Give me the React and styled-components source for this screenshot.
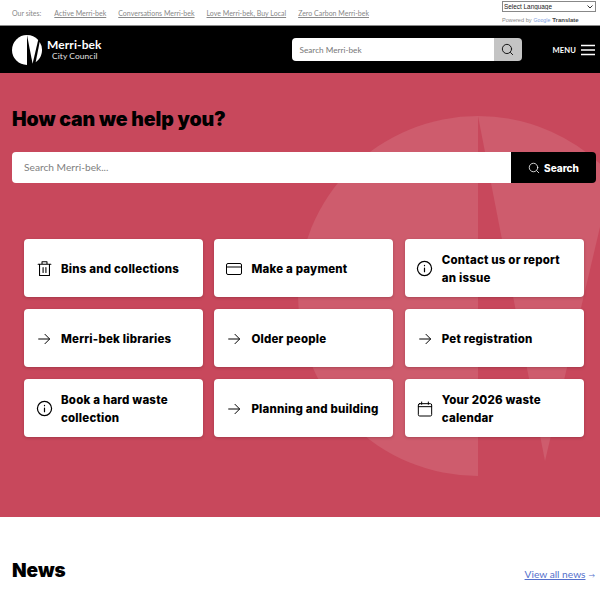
import React from "react"
import styled, { createGlobalStyle } from "styled-components"

const GlobalStyle = createGlobalStyle`
    html, body {
        margin: 0;
        padding: 0;
        background: #fff;
    }
    * {
        box-sizing: border-box;
    }
`

const headingFont = `"Inter", "Liberation Sans", sans-serif`
const bodyFont = `"Lato", "Noto Sans", sans-serif`

const Page = styled.div`
    width: 600px;
    height: 600px;
    overflow: hidden;
    font-family: ${bodyFont};
`

const TopStrip = styled.div`
    height: 26px;
    display: flex;
    justify-content: space-between;
    padding: 1px 4px 0 12px;
    border-bottom: 1px solid #8a8a8a;
    background: #fff;
`

const SiteLinks = styled.div`
    display: flex;
    align-items: center;
    height: 24px;
    font-size: 7px;
    color: #888;
`

const SiteLabel = styled.span`
    margin-right: 13px;
`

const SiteLink = styled.a`
    margin-right: 12px;
    color: #888;
    text-decoration: underline;
`

const Translate = styled.div`
    width: 94px;
`

const SelectWrap = styled.div`
    position: relative;
    height: 11px;
`

const LanguageSelect = styled.select`
    display: block;
    width: 94px;
    height: 11px;
    padding: 0 0 0 1px;
    appearance: none;
    font-family: "Liberation Sans", sans-serif;
    font-size: 6.4px;
    color: #222;
    background: #fff;
    border: 1px solid #888;
    border-radius: 0;
`

const SelectArrow = styled.svg`
    position: absolute;
    right: 3px;
    top: 4px;
    pointer-events: none;
`

const Powered = styled.div`
    margin-top: 4px;
    font-family: "Liberation Sans", sans-serif;
    font-size: 5.6px;
    line-height: 8px;
    white-space: nowrap;
    color: #888;

    b {
        color: #444;
        font-size: 6px;
    }
`

const GoogleWord = styled.span`
    margin: 0 2px;
    font-size: 5.2px;
    color: #7a9be0;
`

const Header = styled.header`
    height: 47px;
    display: flex;
    align-items: center;
    padding: 0 5px 0 12px;
    background: #000;
    color: #fff;
`

const Brand = styled.div`
    display: flex;
    align-items: center;
    gap: 5px;
    flex: 1;
`

const BrandText = styled.div`
    font-family: ${bodyFont};
    text-align: left;
`

const BrandName = styled.div`
    font-size: 12px;
    font-weight: 700;
    line-height: 12px;
    letter-spacing: 0.1px;
`

const BrandSub = styled.div`
    padding-left: 5px;
    font-size: 8.4px;
    line-height: 10px;
    letter-spacing: 0.1px;
    color: #e4e4e4;
`

const HeaderSearch = styled.div`
    width: 230px;
    height: 23px;
    display: flex;
    margin-right: 31px;
    border-radius: 4px;
    overflow: hidden;
`

const HeaderInput = styled.div`
    flex: 1;
    display: flex;
    align-items: center;
    padding-left: 8px;
    font-size: 8.2px;
    color: #777;
    background: #fff;
`

const HeaderButton = styled.div`
    width: 28px;
    display: flex;
    align-items: center;
    justify-content: center;
    color: #111;
    background: #c4c4c4;
`

const Menu = styled.div`
    display: flex;
    align-items: center;
    gap: 5px;
    font-size: 7.6px;
    font-weight: 700;
    letter-spacing: 0.1px;
`

const Hero = styled.section`
    position: relative;
    height: 444px;
    padding: 34px 4px 0 12px;
    overflow: hidden;
    background: #c8485c;
`

const Watermark = styled.svg`
    position: absolute;
    left: 298px;
    top: 43px;
    width: 360px;
    height: 360px;
    fill: #ce5c6d;
`

const HeroTitle = styled.h1`
    position: relative;
    margin: 0;
    font-family: ${headingFont};
    font-size: 19.5px;
    font-weight: 900;
    line-height: 25px;
    letter-spacing: -0.1px;
    color: #000;
`

const HeroSearch = styled.div`
    position: relative;
    height: 31px;
    display: flex;
    margin-top: 20px;
    border-radius: 4px;
    overflow: hidden;
`

const HeroInput = styled.div`
    flex: 1;
    display: flex;
    align-items: center;
    padding: 0 0 1px 12px;
    font-size: 10.2px;
    color: #808080;
    background: #fff;
`

const HeroButton = styled.div`
    width: 85px;
    display: flex;
    align-items: center;
    justify-content: center;
    gap: 4px;
    font-family: ${headingFont};
    font-size: 10px;
    font-weight: 800;
    color: #fff;
    background: #000;
`

const CardGrid = styled.div`
    position: relative;
    display: grid;
    grid-template-columns: repeat(3, 179px);
    grid-auto-rows: 58px;
    column-gap: 11.4px;
    row-gap: 12px;
    margin: 56px 0 0 12px;
`

const Card = styled.a`
    display: flex;
    align-items: center;
    gap: 8px;
    padding: 1px 8px 0 11px;
    border-radius: 4px;
    font-family: ${headingFont};
    font-size: 11.5px;
    font-weight: 800;
    line-height: 18px;
    letter-spacing: 0.2px;
    color: #000;
    background: #fff;
    box-shadow: 0 1px 3px rgba(60, 0, 10, 0.25);
`

const CardIcon = styled.span`
    flex: none;
    width: 18px;
    display: flex;
    justify-content: center;
`

const NewsHead = styled.section`
    display: flex;
    justify-content: space-between;
    align-items: center;
    padding: 41px 5px 0 12px;
`

const NewsTitle = styled.h2`
    margin: 0;
    font-family: ${headingFont};
    font-size: 19px;
    font-weight: 900;
    line-height: 26px;
    color: #000;
`

const ViewAll = styled.a`
    margin-top: 5px;
    font-size: 10.2px;
    color: #5570cc;

    span:first-child {
        text-decoration: underline;
    }
`

const ViewArrow = styled.span`
    margin-left: 3px;
    font-size: 6.5px;
`

const Logo = () => (
    <svg width="30" height="30" viewBox="-180 -180 360 360" fill="#fff">
        <path d="M0 -180A180 180 0 0 0 0 180Z" />
        <path d="M0 -180A180 180 0 0 1 134 -120L67 165Z" />
        <path d="M152 -96A180 180 0 0 1 104 147Z" />
    </svg>
)

const Glyph = ({ size = 16, width = 1.2, color = "currentColor", children }) => (
    <svg
        width={size}
        height={size}
        viewBox="0 0 24 24"
        fill="none"
        stroke={color}
        strokeWidth={width}
        strokeLinecap="round"
        strokeLinejoin="round"
    >
        {children}
    </svg>
)

const SearchIcon = ({ size, width }) => (
    <Glyph size={size} width={width}>
        <circle cx="11" cy="11" r="8.5" />
        <path d="M17.5 17.5L21.5 21.5" />
    </Glyph>
)

const ArrowIcon = () => (
    <Glyph size={16} width={1.5}>
        <path d="M4 12H20M13.5 5L20.5 12L13.5 19" />
    </Glyph>
)

const InfoIcon = () => (
    <Glyph size={17} width={1.7}>
        <circle cx="12" cy="12" r="10" />
        <path d="M12 11.5V16.5M12 7.5V8" />
    </Glyph>
)

const TrashIcon = () => (
    <Glyph size={17} width={1.5}>
        <path d="M3 6H21M8.5 6V2.5H15.5V6M5 6V22H19V6M10 10.5V17.5M14 10.5V17.5" />
    </Glyph>
)

const CardPayIcon = () => (
    <svg width="16" height="12" viewBox="0 0 16 12" fill="none" stroke="currentColor">
        <rect x="0.5" y="0.5" width="15" height="11" rx="1.5" />
        <path d="M0.5 4H15.5" />
    </svg>
)

const CalendarIcon = () => (
    <Glyph size={16} width={1.5}>
        <rect x="2" y="4" width="20" height="18.5" rx="2" />
        <path d="M2 8.5H22M7 1.5V5M17 1.5V5" />
    </Glyph>
)

const MenuIcon = () => (
    <svg width="14" height="12" viewBox="0 0 14 12" stroke="#fff" strokeWidth="1.4">
        <path d="M0 1.5H14M0 6H14M0 10.5H14" />
    </svg>
)

const links = [
    { label: "Bins and collections", icon: <TrashIcon /> },
    { label: "Make a payment", icon: <CardPayIcon /> },
    { label: "Contact us or report an issue", icon: <InfoIcon /> },
    { label: "Merri-bek libraries", icon: <ArrowIcon /> },
    { label: "Older people", icon: <ArrowIcon /> },
    { label: "Pet registration", icon: <ArrowIcon /> },
    { label: "Book a hard waste collection", icon: <InfoIcon /> },
    { label: "Planning and building", icon: <ArrowIcon /> },
    { label: "Your 2026 waste calendar", icon: <CalendarIcon /> },
]

const sites = [
    "Active Merri-bek",
    "Conversations Merri-bek",
    "Love Merri-bek, Buy Local",
    "Zero Carbon Merri-bek",
]

const App = () => (
    <Page>
        <GlobalStyle />
        <TopStrip>
            <SiteLinks>
                <SiteLabel>Our sites:</SiteLabel>
                {sites.map(site => (
                    <SiteLink key={site}>{site}</SiteLink>
                ))}
            </SiteLinks>
            <Translate>
                <SelectWrap>
                    <LanguageSelect defaultValue="">
                        <option value="">Select Language</option>
                    </LanguageSelect>
                    <SelectArrow width="6" height="4" viewBox="0 0 6 4" fill="none" stroke="#333">
                        <path d="M0.5 0.5L3 3L5.5 0.5" />
                    </SelectArrow>
                </SelectWrap>
                <Powered>
                    Powered by
                    <GoogleWord>Google</GoogleWord>
                    <b>Translate</b>
                </Powered>
            </Translate>
        </TopStrip>
        <Header>
            <Brand>
                <Logo />
                <BrandText>
                    <BrandName>Merri-bek</BrandName>
                    <BrandSub>City Council</BrandSub>
                </BrandText>
            </Brand>
            <HeaderSearch>
                <HeaderInput>Search Merri-bek</HeaderInput>
                <HeaderButton>
                    <SearchIcon size={13} width={1.8} />
                </HeaderButton>
            </HeaderSearch>
            <Menu>
                MENU
                <MenuIcon />
            </Menu>
        </Header>
        <Hero>
            <Watermark viewBox="-180 -180 360 360">
                <path d="M0 -180A180 180 0 0 0 0 180Z" />
                <path d="M0 -180A180 180 0 0 1 134 -120L67 165Z" />
            </Watermark>
            <HeroTitle>How can we help you?</HeroTitle>
            <HeroSearch>
                <HeroInput>Search Merri-bek...</HeroInput>
                <HeroButton>
                    <SearchIcon size={12} width={1.6} />
                    Search
                </HeroButton>
            </HeroSearch>
            <CardGrid>
                {links.map(link => (
                    <Card key={link.label}>
                        <CardIcon>{link.icon}</CardIcon>
                        {link.label}
                    </Card>
                ))}
            </CardGrid>
        </Hero>
        <NewsHead>
            <NewsTitle>News</NewsTitle>
            <ViewAll>
                <span>View all news</span>
                <ViewArrow>→</ViewArrow>
            </ViewAll>
        </NewsHead>
    </Page>
)

export default App
